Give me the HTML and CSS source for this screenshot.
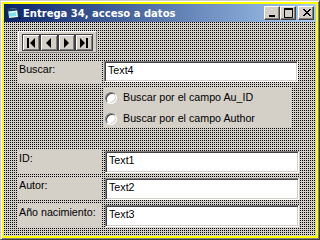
FILE: index.html
```html
<!DOCTYPE html>
<html lang="es">
  <head>
    <meta charset="UTF-8">
    <title>Entrega 34, acceso a datos</title>
    <link rel="stylesheet" href="styles.css">
  </head>
  <body>
    <div class="window">
      <div class="titlebar">
        <svg class="app-icon" width="16" height="16" viewBox="0 0 16 16">
          <path d="M1.5 3.5 L11.5 2.5 L12.5 12.5 L2.5 13.5 Z" fill="#e8ffff" stroke="#102040"/>
          <path d="M2 4 L11 3 L11.3 5.5 L2.2 6.5 Z" fill="#1c3c70"/>
          <path d="M3 8 L10 7.3 L10.3 11 L3.3 11.7 Z" fill="#7fe0f0"/>
          <path d="M13 12 L15 14 L13 14 Z" fill="#000"/>
        </svg>
        <span class="title">Entrega 34, acceso a datos</span>
        <div class="caption-btns">
          <button class="cap-btn" type="button">
            <svg width="10" height="10" viewBox="0 0 10 10"><rect x="1" y="7" width="6" height="2" fill="#000"/></svg>
          </button>
          <button class="cap-btn" type="button">
            <svg width="10" height="10" viewBox="0 0 10 10"><path d="M0.5 1.5 H8.5 V9.5 H0.5 Z" fill="none" stroke="#000"/><rect x="0" y="0" width="9" height="2" fill="#000"/></svg>
          </button>
          <button class="cap-btn close" type="button">
            <svg width="10" height="10" viewBox="0 0 10 10"><path d="M1 1 L8 8 M2 1 L9 8 M8 1 L1 8 M9 1 L2 8" stroke="#000" stroke-width="1"/></svg>
          </button>
        </div>
      </div>

      <div class="client">
        <div class="nav">
          <button class="nav-btn" type="button">
            <svg width="10" height="10" viewBox="0 0 10 10"><rect x="1" y="0" width="2" height="10" fill="#000"/><path d="M9 0 L9 10 L4 5 Z" fill="#000"/></svg>
          </button>
          <button class="nav-btn" type="button">
            <svg width="10" height="10" viewBox="0 0 10 10"><path d="M7 0 L7 10 L2 5 Z" fill="#000"/></svg>
          </button>
          <button class="nav-btn" type="button">
            <svg width="10" height="10" viewBox="0 0 10 10"><path d="M3 0 L3 10 L8 5 Z" fill="#000"/></svg>
          </button>
          <button class="nav-btn" type="button">
            <svg width="10" height="10" viewBox="0 0 10 10"><path d="M1 0 L1 10 L6 5 Z" fill="#000"/><rect x="7" y="0" width="2" height="10" fill="#000"/></svg>
          </button>
        </div>

        <div class="row search-row">
          <div class="label">Buscar:</div>
          <div class="field">Text4</div>
        </div>

        <div class="options">
          <div class="option"><span class="radio"></span>Buscar por el campo Au_ID</div>
          <div class="option"><span class="radio"></span>Buscar por el campo Author</div>
        </div>

        <div class="fields">
          <div class="row">
            <div class="label">ID:</div>
            <div class="field">Text1</div>
          </div>
          <div class="row">
            <div class="label">Autor:</div>
            <div class="field">Text2</div>
          </div>
          <div class="row">
            <div class="label">Año nacimiento:</div>
            <div class="field">Text3</div>
          </div>
        </div>
      </div>
    </div>
  </body>
</html>
```

FILE: styles.css
```css
*   {
    box-sizing: border-box;
}
body    {
    margin: 0;
    font-family: "Liberation Sans", Arial, sans-serif;
    font-size: 10.7px;
    color: #000;
}
.window {
    width: 320px;
    height: 240px;
    padding: 3px;
    background: #ffff00;
    border: 1px solid;
    border-color: #d4d0c8 #404040 #404040 #d4d0c8;
    box-shadow: inset 1px 1px #fff, inset -1px -1px #808080;
}

/* title bar */
.titlebar   {
    height: 18px;
    display: flex;
    align-items: center;
    padding: 0 2px 0 2px;
    background: linear-gradient(90deg, #0a246a, #a6caf0);
}
.app-icon   {
    flex: none;
    margin-right: 1px;
}
.title  {
    font-family: "DejaVu Sans", Verdana, sans-serif;
    font-weight: bold;
    font-size: 10px;
    color: #fff;
    white-space: nowrap;
    margin-top: 1px;
}
.caption-btns   {
    margin-left: auto;
    display: flex;
}
.cap-btn    {
    width: 16px;
    height: 14px;
    padding: 0 0 0 2px;
    display: flex;
    align-items: center;
    justify-content: center;
    background: #d4d0c8;
    border: 1px solid;
    border-color: #fff #404040 #404040 #fff;
    box-shadow: inset -1px -1px #808080;
}
.cap-btn.close  {
    margin-left: 2px;
}

/* client area with dithered background */
.client {
    height: 214px;
    padding: 9px 0 0 13px;
    background-color: #d4d0c8;
    background-image: conic-gradient(from 0deg at 1px 1px, #d4d0c8 0 270deg, #000 0);
    background-size: 2px 2px;
}
.nav    {
    display: flex;
    width: 79px;
    height: 22px;
    margin-left: 1px;
    padding: 2px 3px;
    background: #d4d0c8;
    border: 1px solid;
    border-color: #fff #808080 #808080 #fff;
}
.nav-btn    {
    width: 18px;
    height: 17px;
    padding: 0;
    display: flex;
    align-items: center;
    justify-content: center;
    background: #d4d0c8;
    border: 1px solid #404040;
    box-shadow: inset 1px 1px #fff, inset -1px -1px #808080;
}

.row    {
    display: flex;
    align-items: flex-start;
}
.search-row {
    margin-top: 8px;
}
.label  {
    width: 85px;
    height: 23px;
    padding: 2px 0 0 2px;
    background: #d4d0c8;
    line-height: 13px;
}
.field  {
    width: 194px;
    height: 22px;
    margin: 1px 0 0 3px;
    padding: 2px 0 0 3px;
    background: #fff;
    line-height: 13px;
    border: 1px solid;
    border-color: #808080 #fff #fff #808080;
    box-shadow: inset 1px 1px #404040, inset -1px -1px #d4d0c8;
}
.search-row .field  {
    height: 21px;
    margin: 0 0 0 2px;
}

.options    {
    margin: 3px 0 0 86px;
    display: flex;
    flex-direction: column;
    gap: 1px;
}
.option {
    width: 188px;
    height: 20px;
    display: flex;
    align-items: center;
    padding-left: 2px;
    background: #d4d0c8;
    line-height: 13px;
}
.radio  {
    width: 12px;
    height: 12px;
    margin: 1px 6px 0 0;
    border-radius: 50%;
    background: #fff;
    border: 1px solid;
    border-color: #808080 #fff #fff #808080;
    box-shadow: inset 1px 1px #404040, inset -1px -1px #d4d0c8;
}

.fields {
    margin-top: 22px;
    display: flex;
    flex-direction: column;
    gap: 4px;
}
```
